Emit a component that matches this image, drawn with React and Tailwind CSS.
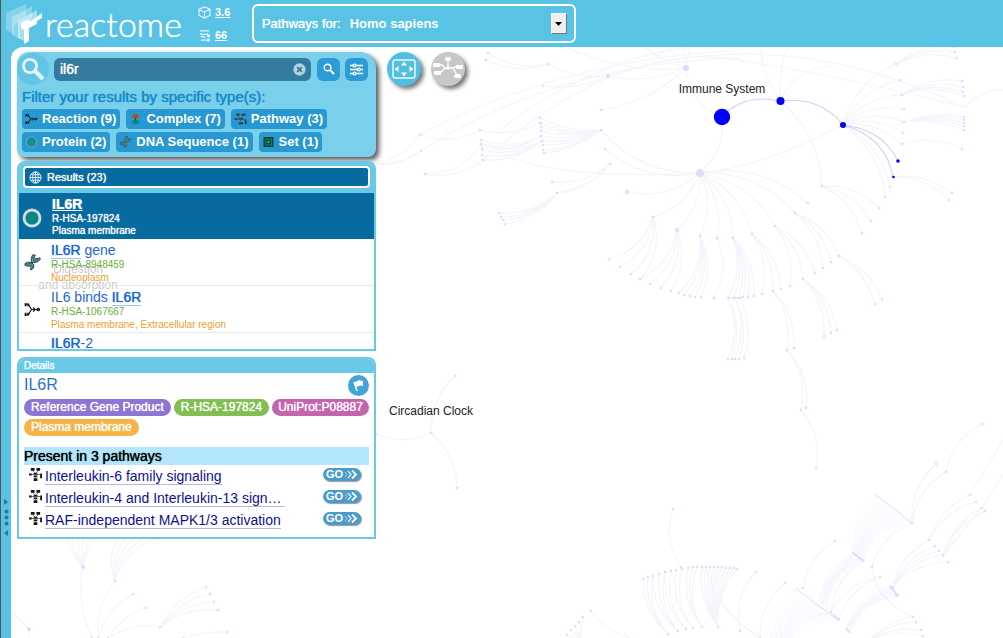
import { useState } from "react";

// [hub x, hub y, bend, [[x, y], ...]] - positive bend bulges to the left of the travel direction
const fans = [
  [700, 173, 0.24, [[653, 217], [677, 230], [700, 236], [717, 238], [733, 238], [752, 234], [775, 226], [795, 213], [808, 203], [627, 192], [601, 130], [605, 149]]],
  [653, 217, 0.28, [[609, 259], [620, 267], [631, 274], [640, 279]]],
  [677, 230, 0.25, [[640, 279], [650, 284], [661, 288], [671, 291]]],
  [700, 236, 0.24, [[679, 293], [684, 295], [690, 296], [695, 297], [701, 297]]],
  [717, 238, 0.24, [[714, 298]]],
  [733, 238, 0.22, [[728, 298], [733, 298], [738, 298], [743, 297], [748, 297], [754, 296]]],
  [752, 234, 0.22, [[762, 294], [773, 291], [781, 289]]],
  [775, 226, 0.22, [[790, 286], [803, 279], [815, 273]]],
  [795, 213, 0.22, [[823, 268], [831, 262], [839, 256]]],
  [839, 256, 0.2, [[875, 304], [882, 299]]],
  [803, 279, 0.22, [[824, 336], [831, 333], [837, 330]]],
  [729, 298, 0.2, [[728, 359], [732, 359]]],
  [735, 298, 0.2, [[735, 359], [739, 359]]],
  [740, 298, 0.2, [[744, 358]]],
  [773, 291, 0.22, [[787, 350], [794, 348]]],
  [787, 350, 0.24, [[801, 410], [806, 408]]],
  [801, 410, 0.24, [[816, 468]]],
  [780, 101, 0.22, [[822, 186]]],
  [822, 186, 0.22, [[862, 233], [871, 221], [879, 208]]],
  [843, 125, 0.24, [[896, 64], [900, 80], [902, 95], [904, 109], [904, 122], [903, 133], [902, 144], [885, 197], [890, 187]]],
  [904, 122, 0.14, [[964, 117], [964, 120], [964, 123], [964, 126], [964, 130]]],
  [902, 95, 0.2, [[962, 81], [963, 87], [963, 92], [964, 96]]],
  [902, 144, 0.2, [[962, 149]]],
  [893, 177, 0.2, [[949, 200], [952, 193]]],
  [896, 64, 0.2, [[954, 47], [955, 52], [957, 58]]],
  [557, 193, 0.22, [[499, 213], [501, 217], [503, 220], [505, 224]]],
  [601, 130, 0.14, [[540, 118], [540, 123], [541, 127], [541, 131], [541, 136], [542, 141], [543, 145], [543, 150], [544, 153]]],
  [541, 123, 0.18, [[480, 130]]],
  [541, 136, 0.2, [[481, 140], [481, 144], [482, 148]]],
  [542, 141, 0.2, [[481, 144], [482, 150], [482, 155], [483, 160]]],
  [480, 130, 0.22, [[420, 135]]],
  [482, 144, 0.26, [[425, 174]]],
  [483, 160, 0.22, [[425, 174]]],
  [420, 135, 0.22, [[372, 164]]],
  [421, 151, 0.2, [[372, 164], [370, 163]]],
  [610, 164, 0.2, [[552, 182], [557, 193]]],
  [608, 76, 0.16, [[543, 86], [548, 64]]],
  [548, 64, 0.2, [[488, 53], [486, 60]]],
  [686, 68, 0.16, [[608, 76], [601, 110]]],
  [431, 433, 0.22, [[376, 434], [455, 376], [457, 488]]],
  [668, 634, 0.24, [[643, 579], [648, 577], [653, 576]]],
  [678, 631, 0.24, [[653, 576], [659, 574], [665, 572]]],
  [686, 629, 0.24, [[665, 572], [671, 571]]],
  [693, 628, 0.24, [[676, 570], [682, 569]]],
  [702, 627, 0.24, [[688, 568], [693, 567], [697, 567]]],
  [718, 627, 0.2, [[702, 567], [706, 567], [710, 567], [714, 567], [718, 567], [722, 567], [726, 568], [730, 568], [734, 568], [737, 569]]],
  [681, 567, 0.24, [[673, 509]]],
  [740, 631, 0.26, [[756, 572]]],
  [760, 638, 0.24, [[785, 583]]],
  [803, 588, 0.24, [[835, 541]]],
  [912, 523, 0.24, [[936, 464], [946, 472]]],
  [946, 472, 0.24, [[982, 424]]],
  [872, 567, 0.24, [[912, 523]]],
  [831, 612, 0.24, [[880, 577], [863, 561]]],
  [839, 619, 0.24, [[880, 577]]],
  [892, 588, 0.22, [[929, 540], [935, 546], [939, 551], [943, 555], [948, 562]]],
  [929, 540, 0.22, [[970, 495], [976, 502]]],
  [943, 555, 0.2, [[982, 508], [985, 511]]],
  [870, 640, 0.18, [[913, 617], [916, 622], [921, 630], [923, 636]]],
  [83, 567, 0.1, [[67, 538], [72, 538], [78, 538], [84, 538], [90, 538], [95, 538]]],
  [115, 581, 0.24, [[118, 538], [126, 538], [134, 538], [144, 538], [156, 538]]],
  [92, 638, 0.16, [[83, 567]]],
  [98, 638, 0.2, [[115, 581], [133, 594]]],
  [108, 638, 0.2, [[146, 608], [160, 627]]],
  [160, 627, 0.2, [[206, 587], [210, 594], [214, 602], [218, 610]]],
  [183, 638, 0.1, [[227, 632]]],
  [640, 640, 0.2, [[591, 611]]],
  [580, 640, 0, [[567, 635], [571, 630], [575, 626], [579, 622], [583, 617]]],
  [29, 640, 0.1, [[29, 629]]],
];

// dense bundles between two rows of nodes: from, to, count
const bundles = [
  [[853, 553], [863, 561], [876, 495], [912, 523], 18],
  [[819, 602], [827, 608], [853, 553], [863, 561], 14],
  [[846, 628], [850, 633], [890, 586], [898, 596], 12],
  [[770, 640], [790, 640], [797, 589], [838, 620], 20],
];

const curve = (x1, y1, x2, y2, bend) => {
  const dx = x2 - x1;
  const dy = y2 - y1;
  const cx = (x1 + x2) / 2 + dy * bend;
  const cy = (y1 + y2) / 2 - dx * bend;
  return `M${x1} ${y1}Q${cx} ${cy} ${x2} ${y2}`;
};

const lerp = (a, b, t) => [a[0] + (b[0] - a[0]) * t, a[1] + (b[1] - a[1]) * t];

const longCurves = [
  "M722 117Q690 105 686 68",
  "M722 117Q726 150 700 173",
  "M843 125Q760 168 700 173",
  "M420 135Q560 60 740 50",
  "M421 151Q560 62 740 58",
  "M483 160Q620 40 740 60T964 107",
  "M608 76Q780 20 964 107",
  "M500 130Q590 60 690 47",
  "M504 155Q560 180 700 173",
  "M964 107Q985 88 1003 90",
  "M686 68Q660 60 645 47",
  "M686 68Q676 58 668 47",
  "M686 68L683 47",
  "M686 68L690 47",
  "M780 101Q760 70 761 47",
  "M780 101Q778 70 788 47",
  "M780 101Q795 68 832 66",
  "M686 68Q630 75 565 47",
  "M970 495L1003 440",
  "M943 555L982 508L1003 474",
  "M872 567Q875 600 913 617",
  "M706 567Q716 610 760 638",
  "M11 612Q20 620 29 629",
];

const bigNodes = [
  [700, 173, 4], [686, 68, 3], [608, 76, 2], [627, 192, 2], [677, 230, 2],
  [83, 567, 2], [29, 629, 2], [115, 581, 1], [892, 588, 2], [897, 595, 2],
];

const PathwayMap = () => (
  <svg
    className="absolute inset-0 h-full w-full"
    viewBox="11 47 992 591"
    preserveAspectRatio="xMinYMin slice"
    role="img"
    aria-label="Pathways overview"
  >
    <g fill="none" stroke="#f4f4fc" strokeWidth="1.2">
      {fans.map(([x, y, bend, ends], i) => (
        <path key={i} d={ends.map(([ex, ey]) => curve(x, y, ex, ey, bend)).join("")} />
      ))}
      {longCurves.map((d) => (
        <path key={d} d={d} />
      ))}
    </g>
    {bundles.map(([a, b, c, d, count], i) => (
      <g key={i}>
        {Array.from({ length: count }, (_, n) => {
          const t = n / (count - 1);
          const p = lerp(a, b, (n % 5) / 4);
          const q = lerp(c, d, t);
          return (
            <g key={n}>
              <path d={curve(p[0], p[1], q[0], q[1], 0.25)} fill="none" stroke="#8080ff" strokeOpacity=".05" />
              <circle cx={q[0]} cy={q[1]} r="1" fill="#d4d4ff" fillOpacity=".6" />
            </g>
          );
        })}
      </g>
    ))}
    <g stroke="#dcdcff" strokeWidth="1.6">
      <path d="M853 553L864 561M890 586L898 596M833 614L839 620M846 628L850 633" />
    </g>
    <g fill="#dedeff">
      {fans.flatMap(([x, y, , ends], i) =>
        [[x, y], ...ends].map(([cx, cy], j) => <circle key={`${i}-${j}`} cx={cx} cy={cy} r="1.3" />),
      )}
    </g>
    <g fill="#dcdcfb">
      {bigNodes.map(([cx, cy, r]) => (
        <circle key={`${cx}-${cy}`} cx={cx} cy={cy} r={r} />
      ))}
    </g>

    {/* Highlighted branch */}
    <g fill="none" stroke="#cfcfff" strokeWidth="1.2">
      <path d="M722 117Q744 93 780 101" />
      <path d="M780 101Q820 96 843 125" />
      <path d="M843 125Q882 129 898 161" />
      <path d="M843 125Q886 137 893 177" />
    </g>
    <g fill="#0000ff">
      <circle cx="722" cy="117" r="8.2" />
      <circle cx="780.5" cy="101" r="4" />
      <circle cx="843" cy="125" r="3" />
      <circle cx="898" cy="161" r="1.8" />
      <circle cx="893.5" cy="177" r="1.3" />
    </g>
    <g className="font-['Liberation_Sans',Arial,sans-serif] text-[12px]" fill="#222" textAnchor="middle">
      <text x="722" y="93">Immune System</text>
      <text x="431" y="415">Circadian Clock</text>
      <text x="78" y="273">Digestion</text>
      <text x="78" y="289">and absorption</text>
    </g>
  </svg>
);

const Logo = () => (
  <svg className="h-[42px] w-[37px]" viewBox="0 0 37 42" fill="#fff" aria-hidden="true">
    <path d="M0 10L20 1V14L8 22V31L0 27Z" opacity=".28" />
    <path d="M6 14L26 3V16L14 24V36L6 32Z" opacity=".3" />
    <path d="M12 18L31 7V16L20 24V39L12 35Z" opacity=".45" />
    <path d="M15 20L21 17L25 18L36 10V15L31 18V21L23 25V38L18 41V27L15 25Z" />
  </svg>
);

const SearchIcon = ({ className }) => (
  <svg className={className} viewBox="0 0 24 24" fill="none" stroke="currentColor" aria-hidden="true">
    <circle cx="9" cy="9" r="6.6" strokeWidth="2.8" />
    <path d="M14 14L22 22" strokeWidth="4" />
  </svg>
);

const ReactionIcon = ({ className }) => (
  <svg className={className} viewBox="0 0 16 14" fill="none" stroke="#101820" strokeWidth="1.1" aria-hidden="true">
    <path d="M1 2H4L7 7L4 12H1M7 7H15M8.5 5L10.5 7L8.5 9" />
    <path d="M1.5 1V4M1.5 10V13M4 1.5V4M4 10V12.5" strokeWidth="1.8" />
    <circle cx="13.5" cy="7" r="1.2" />
  </svg>
);

const ComplexIcon = ({ className }) => (
  <svg className={className} viewBox="0 0 14 14" aria-hidden="true">
    <path d="M5 1H9L11 4L9 7H5L3 4Z" fill="#9b5a1a" />
    <ellipse cx="7" cy="10.5" rx="4.5" ry="2.5" fill="#0b8a8c" />
    <path d="M7 6V9" stroke="#333" />
  </svg>
);

const PathwayIcon = ({ className }) => (
  <svg className={className} viewBox="0 0 14 14" fill="#151515" aria-hidden="true">
    <path d="M2 0H6V3H2ZM8 0H12V3H8ZM0 6H3V8H0ZM5 5H9V7H5ZM5 8H9V10H5ZM5 11H9V14H5ZM12 6H14V11H12Z" />
    <path d="M4 3L6 5M10 3L8 5M7 7V11M3 7H12" fill="none" stroke="#444" strokeWidth=".8" />
  </svg>
);

const PathwayFilterIcon = ({ className }) => (
  <svg className={className} viewBox="0 0 14 14" fill="#2f3438" aria-hidden="true">
    <path d="M2 1H6V3H2ZM8 1H13V3H8ZM0 6H4V8H0ZM5 6H10V8H5ZM5 11H10V13H5ZM12 8H14V13H12Z" />
    <path d="M4 3L7 6M10 3L8 6M7 8V11M10 7H13V8" fill="none" stroke="#4a4f55" strokeWidth=".8" />
  </svg>
);

const ProteinIcon = ({ className }) => (
  <svg className={className} viewBox="0 0 20 20" aria-hidden="true">
    <circle cx="10" cy="10" r="8" fill="#0a8580" stroke="#cfdde4" strokeWidth="2.8" />
  </svg>
);

const ProteinFilterIcon = ({ className }) => (
  <svg className={className} viewBox="0 0 14 14" aria-hidden="true">
    <circle cx="7" cy="7" r="6" fill="#0e8f92" stroke="#7fa3b0" strokeWidth="1.2" />
  </svg>
);

const DnaIcon = ({ className }) => (
  <svg className={className} viewBox="0 0 18 18" fill="none" stroke="#24474f" aria-hidden="true">
    <path d="M1 10Q3 8 8 9Q12 11 10 15L7 17Q8 13 6 13Q3 13 1 12Z" fill="#6f979c" />
    <path d="M8 9Q7 4 9 1L12 1Q10 4 12 5Q15 5 17 4V6Q14 10 8 9Z" fill="#6f979c" />
    <path d="M2 11L8 10M5 12L9 12M8 15L10 13M9 3L10 5L11 8M13 5L12 8M15 5L14 7" strokeWidth=".8" />
  </svg>
);

const SetIcon = ({ className }) => (
  <svg className={className} viewBox="0 0 14 14" aria-hidden="true">
    <path d="M2 2H12V12H2Z" fill="#12785a" stroke="#0b4031" strokeWidth="1.6" />
    <path d="M5 5H9V9H5Z" fill="#35a08c" stroke="#063d2c" strokeWidth="1.2" />
  </svg>
);

const filters = [
  { label: "Reaction (9)", Icon: ReactionIcon },
  { label: "Complex (7)", Icon: ComplexIcon },
  { label: "Pathway (3)", Icon: PathwayFilterIcon },
  { label: "Protein (2)", Icon: ProteinFilterIcon },
  { label: "DNA Sequence (1)", Icon: DnaIcon },
  { label: "Set (1)", Icon: SetIcon },
];

const results = [
  { id: "R-HSA-8948459", place: "Nucleoplasm", Icon: DnaIcon, title: <><Mark>IL6R</Mark> gene</> },
  { id: "R-HSA-1067667", place: "Plasma membrane, Extracellular region", Icon: ReactionIcon, title: <>IL6 binds <Mark>IL6R</Mark></> },
];

const pathways = [
  "Interleukin-6 family signaling",
  "Interleukin-4 and Interleukin-13 signaling",
  "RAF-independent MAPK1/3 activation",
];

function Mark({ children }) {
  return (
    <span className="border-b border-current/40 [text-shadow:0_0_1px_currentColor]">{children}</span>
  );
}

const Header = () => (
  <header className="flex h-[47px] items-center border-l border-[#555] pl-[5px] text-white">
    <a href="#home" className="flex items-center gap-[2px]" aria-label="reactome">
      <Logo />
      <span className="font-['Lato',sans-serif] text-[34px] leading-[42px] font-light [text-shadow:0_0_1px_#fff]">reactome</span>
    </a>
    <div className="ml-4 flex w-[54px] flex-col gap-[9px] text-[11px] leading-[14px] font-bold">
      <div className="flex items-center gap-1">
        <svg className="h-[13px] w-[13px]" viewBox="0 0 14 14" fill="none" stroke="#d5f0fa" strokeWidth="1.3" aria-hidden="true">
          <path d="M7 1L13 3.5V10L7 13L1 10V3.5ZM1 3.5L7 6.5L13 3.5M7 6.5V13" />
        </svg>
        <a href="#version" className="underline">3.6</a>
      </div>
      <div className="flex items-center gap-1">
        <svg className="h-[13px] w-[13px]" viewBox="0 0 14 14" fill="none" stroke="#e6f6fc" strokeWidth="1.5" aria-hidden="true">
          <path d="M2 2H12M2 5Q7 7 11 5M3 8L8 9M3 12H9" />
          <circle cx="11.5" cy="7.5" r="1" />
          <circle cx="11" cy="12" r="1" />
        </svg>
        <a href="#release" className="underline">66</a>
      </div>
    </div>
    <div className="relative flex h-[39px] w-[324px] items-center gap-[9px] rounded-md border-2 border-white pr-2 pl-2 text-[13px]">
      <label htmlFor="species" className="[text-shadow:0_0_1px_#fff]">Pathways for:</label>
      <select id="species" className="h-5 grow appearance-none bg-transparent font-bold outline-none" defaultValue="Homo sapiens">
        <option>Homo sapiens</option>
      </select>
      <span className="pointer-events-none absolute right-[7px] flex h-[21px] w-4 items-center justify-center border border-t-white border-r-[#777] border-b-[#777] border-l-white bg-[#eee]">
        <svg className="h-1 w-[7px]" viewBox="0 0 7 4" aria-hidden="true">
          <path d="M0 0H7L3.5 4Z" fill="#000" />
        </svg>
      </span>
    </div>
  </header>
);

const SearchPanel = () => {
  const [query, setQuery] = useState("il6r");

  return (
    <section className="rounded-xl rounded-tr-2xl rounded-b-lg bg-[#7acfea] pt-px pb-[5px] shadow-[3px_3px_5px_#555]">
      <div className="flex h-8 items-center pr-2">
        <span className="flex h-8 w-8 items-center justify-center rounded-full bg-[#63c5e6]">
          <SearchIcon className="h-6 w-6 text-[#e3f5fb]" />
        </span>
        <div className="ml-[5px] flex h-[23px] grow items-center rounded-md bg-[#337c9e] pr-[5px] pl-[6px]">
          <input
            type="text"
            aria-label="Search"
            value={query}
            onChange={(e) => setQuery(e.target.value)}
            className="w-0 grow bg-transparent text-[14px] text-white outline-none [text-shadow:0_0_1px_#fff]"
          />
          <button type="button" aria-label="Clear" onClick={() => setQuery("")}>
            <svg className="h-[13px] w-[13px]" viewBox="0 0 14 14" aria-hidden="true">
              <circle cx="7" cy="7" r="6.6" fill="#b5d2de" />
              <path d="M4.5 4.5L9.5 9.5M9.5 4.5L4.5 9.5" stroke="#337c9e" strokeWidth="2" />
            </svg>
          </button>
        </div>
        <button type="button" aria-label="Run search" className="ml-[6px] flex h-[23px] w-[23px] items-center justify-center rounded-md bg-[#2b9cd6] text-white">
          <SearchIcon className="h-3 w-3" />
        </button>
        <button type="button" aria-label="Search options" className="ml-[5px] flex h-[23px] w-[23px] items-center justify-center rounded-md bg-[#2b9cd6]">
          <svg className="h-[13px] w-[13px]" viewBox="0 0 13 13" fill="#2b9cd6" stroke="#fff" strokeWidth="1.3" aria-hidden="true">
            <path d="M0 2.5H13M0 6.5H13M0 10.5H13" />
            <circle cx="4.5" cy="2.5" r="1.4" />
            <circle cx="9" cy="6.5" r="1.4" />
            <circle cx="4.5" cy="10.5" r="1.4" />
          </svg>
        </button>
      </div>
      <p className="pt-[2px] pb-[2px] pl-[5px] text-[15px] leading-5 text-[#1489cb] [text-shadow:0_0_1px_#1489cb]">Filter your results by specific type(s):</p>
      <div className="flex flex-wrap gap-x-[6px] gap-y-[3px] px-[5px]">
        {filters.map(({ label, Icon }) => (
          <button key={label} type="button" className="flex h-5 items-center gap-1 rounded bg-[#2798d2] pr-1 pl-[3px] text-[13px] font-bold text-white">
            <Icon className="h-3 w-[13px]" />
            {label}
          </button>
        ))}
      </div>
    </section>
  );
};

const ResultsPanel = () => (
  <section className="mt-1 overflow-hidden rounded-t-lg border-2 border-[#6ac9e7] bg-white/75">
    <div className="bg-[#6ac9e7] px-1 pt-[3px] pb-[5px]">
      <button type="button" className="flex h-[22px] w-full items-center gap-[5px] rounded-sm border-2 border-white bg-[#076b9f] px-1 text-[11px] text-white [text-shadow:0_0_1px_#fff]">
        <svg className="h-[13px] w-[13px]" viewBox="0 0 14 14" fill="none" stroke="#e8f4fa" aria-hidden="true">
          <circle cx="7" cy="7" r="6" />
          <ellipse cx="7" cy="7" rx="3" ry="6" />
          <path d="M7 1V13M1 7H13M2 4H12M2 10H12" />
        </svg>
        Results (23)
      </button>
    </div>
    <ul className="text-[10px]">
      <li className="flex h-[46px] items-center gap-[10px] bg-[#076b9f] pl-[3px] text-white [text-shadow:0_0_1px_#fff]">
        <ProteinIcon className="mt-1 h-5 w-5" />
        <div>
          <h3 className="text-[14px] leading-4 font-bold underline">IL6R</h3>
          <p className="leading-[13px]">R-HSA-197824</p>
          <p className="leading-3">Plasma membrane</p>
        </div>
      </li>
      {results.map(({ id, place, Icon, title }) => (
        <li key={id} className="flex h-[47px] items-center gap-[10px] border-b border-[#e8e8e8] pl-[5px]">
          <Icon className="h-[17px] w-[17px]" />
          <div>
            <h3 className="text-[14px] leading-[18px] text-[#1f66cf]">{title}</h3>
            <p className="leading-3 text-[#6cae3d]">{id}</p>
            <p className="leading-[13px] text-[#f0a02e]">{place}</p>
          </div>
        </li>
      ))}
      <li className="h-4 pt-px pl-8">
        <h3 className="text-[14px] leading-[18px] text-[#1f66cf]"><Mark>IL6R</Mark>-2</h3>
      </li>
    </ul>
  </section>
);

const GoButton = ({ name }) => (
  <button type="button" aria-label={`Go to ${name}`} className="mr-2 mb-1 ml-auto flex h-[13px] w-[38px] items-center gap-px rounded-full bg-[#4a9dc8] pl-[3px] text-[11px] leading-[13px] font-bold text-white shadow-[1px_1px_1px_#999]">
    GO
    <svg className="h-[9px] w-[15px]" viewBox="0 0 15 9" fill="none" aria-hidden="true">
      <path d="M1 2L3 4.5L1 7" stroke="#a9d3e7" />
      <path d="M4 1L7 4.5L4 8" stroke="#d3eaf4" strokeWidth="1.4" />
      <path d="M8 0.5L12 4.5L8 8.5" stroke="#fff" strokeWidth="1.8" />
    </svg>
  </button>
);

const DetailsPanel = () => (
  <section className="mt-[6px] overflow-hidden rounded-t-lg border-2 border-[#6ac9e7] bg-white pb-[6px]">
    <h2 className="h-[14px] bg-[#6ac9e7] pl-[5px] text-[10px] leading-[14px] text-white [text-shadow:0_0_1px_#fff]">Details</h2>
    <div className="px-[5px]">
      <div className="flex h-6 items-center justify-between">
        <h3 className="text-[16px] text-[#2a72d0]">IL6R</h3>
        <button type="button" aria-label="Flag" className="flex h-[21px] w-[21px] items-center justify-center rounded-full bg-[#41a5da]">
          <svg className="h-[13px] w-[13px]" viewBox="0 0 13 13" aria-hidden="true">
            <path d="M2 3L5 12" stroke="#fff" strokeWidth="1.5" />
            <path d="M2 3Q5 3 7 1Q9 2 11 2L11 7Q9 6 7 7L4 8Z" fill="#fff" />
          </svg>
        </button>
      </div>
      <div className="mt-[2px] flex flex-wrap gap-[3px] text-[12px] leading-[17px] text-white [text-shadow:0_0_1px_#fff]">
        <span className="rounded-full bg-[#8d76d3] px-[7px]">Reference Gene Product</span>
        <span className="rounded-full bg-[#82bf50] px-[7px]">R-HSA-197824</span>
        <span className="rounded-full bg-[#c464ae] px-[6px]">UniProt:P08887</span>
        <span className="rounded-full bg-[#f5b445] px-[7px]">Plasma membrane</span>
      </div>
      <h4 className="mt-[11px] bg-[#b4e6fb] text-[14px] leading-[18px] text-black [text-shadow:0_0_1px_#000]">Present in 3 pathways</h4>
      <ul>
        {pathways.map((name) => (
          <li key={name} className="flex h-[22px] items-center pl-[5px]">
            <PathwayIcon className="mr-[3px] mb-1 h-[13px] w-[13px]" />
            <div className="w-[240px] truncate text-[14px] leading-5 text-[#10108f]">
              <a href="#pathway" className="border-b border-[#b9b9dd]">{name}</a>
            </div>
            <GoButton name={name} />
          </li>
        ))}
      </ul>
    </div>
  </section>
);

const App = () => {
  return (
    <div className="flex min-h-screen flex-col bg-[#58c3e5] font-['Liberation_Sans',Arial,sans-serif]">
      <Header />
      <div className="flex grow">
        {/* Drag handle of the hierarchy panel */}
        <div className="relative w-[11px] shrink-0 border-l border-[#555]">
          <svg className="absolute top-[452px] left-[2px] h-[38px] w-[7px]" viewBox="0 0 7 38" fill="#2379a2" aria-hidden="true">
            <path d="M1 0L5 3L1 6ZM5 31L1 34L5 37Z" />
            <circle cx="3.5" cy="12.5" r="2" />
            <circle cx="3.5" cy="18.5" r="2" />
            <circle cx="3.5" cy="24.5" r="2" />
          </svg>
        </div>
        <main className="relative grow overflow-hidden rounded-tl-xl bg-white">
          <PathwayMap />
          <div className="relative flex items-start gap-[11px] pt-[5px] pb-5 pl-[6px]">
            <div className="w-[359px]">
              <SearchPanel />
              <ResultsPanel />
              <DetailsPanel />
            </div>
            <div className="flex gap-[10px]">
              <button type="button" aria-label="Fit to screen" className="flex h-[34px] w-[34px] items-center justify-center rounded-full bg-[#50bfe2] shadow-[3px_3px_4px_#777]">
                <svg className="h-5 w-6" viewBox="0 0 24 20" aria-hidden="true">
                  <rect x="1" y="1" width="22" height="18" rx="2.5" fill="none" stroke="#e9f7fc" strokeWidth="1.5" />
                  <path d="M12 2.5L15 6.5H9ZM12 17.5L15 13.5H9ZM2.5 10L6.5 7V13ZM21.5 10L17.5 7V13Z" fill="#fff" />
                </svg>
              </button>
              <button type="button" aria-label="Show diagram" className="flex h-[34px] w-[34px] items-center justify-center rounded-full bg-[#c8c8c8] shadow-[3px_3px_4px_#777]">
                <svg className="h-6 w-[30px]" viewBox="0 0 30 24" fill="#fff" aria-hidden="true">
                  <path d="M6 8H9L12 11H20L24 9M6 15H8L12 11M15 11V3M20 11L24 18" fill="none" stroke="#fff" strokeWidth="1.3" />
                  <rect x="0" y="6" width="7" height="4" rx="1" />
                  <rect x="1" y="14" width="7" height="4" rx="1" />
                  <rect x="12" y="0" width="6" height="4" rx="2" />
                  <rect x="23" y="8" width="7" height="4" rx="1" />
                  <rect x="21" y="17" width="7" height="4" rx="2" />
                  <circle cx="15" cy="11" r="1.7" />
                </svg>
              </button>
            </div>
          </div>
        </main>
      </div>
    </div>
  );
};

export default App;
